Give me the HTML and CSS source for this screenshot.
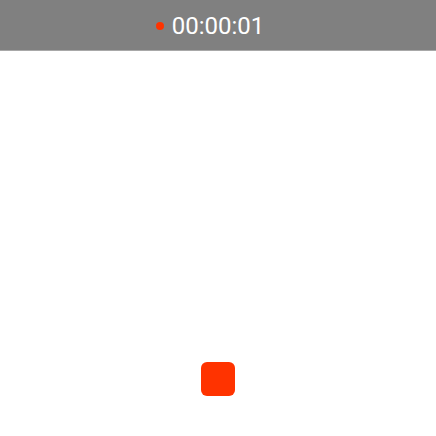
FILE: index.html
```
<!DOCTYPE html>
<html lang="en">

<head>
    <meta charset="UTF-8">
    <meta name="viewport" content="width=device-width, initial-scale=1.0">
    <title>Recorder</title>
    <link rel="stylesheet" href="styles.css">
</head>

<body>
    <header class="status-bar">
        <span class="dot"></span>
        <time class="timer">00:00:01</time>
    </header>

    <main class="preview">
        <button class="stop" type="button" aria-label="Stop recording"></button>
    </main>
</body>

</html>
```

FILE: styles.css
```
body {
    font-family: Roboto, sans-serif;
    background-color: #fff;
    margin: 0;
    min-height: 100vh;
    display: flex;
    flex-direction: column;
}

.status-bar {
    display: flex;
    justify-content: center;
    align-items: center;
    gap: 8px;
    padding: 10px 0 8px;
    background-color: #808080;
    border-bottom: 1px solid #a8a8a8;
}

.dot {
    width: 8px;
    height: 8px;
    border-radius: 50%;
    background-color: #ff3300;
}

/* right padding balances the dot so the time stays centered */
.timer {
    padding-right: 16px;
    color: #fff;
    font-size: 24px;
    line-height: 32px;
}

.preview {
    flex: 1;
    display: flex;
    justify-content: center;
    align-items: flex-end;
    padding-bottom: 40px;
}

.stop {
    width: 34px;
    height: 34px;
    padding: 0;
    border: none;
    border-radius: 6px;
    background-color: #ff3300;
    cursor: pointer;
}
```
